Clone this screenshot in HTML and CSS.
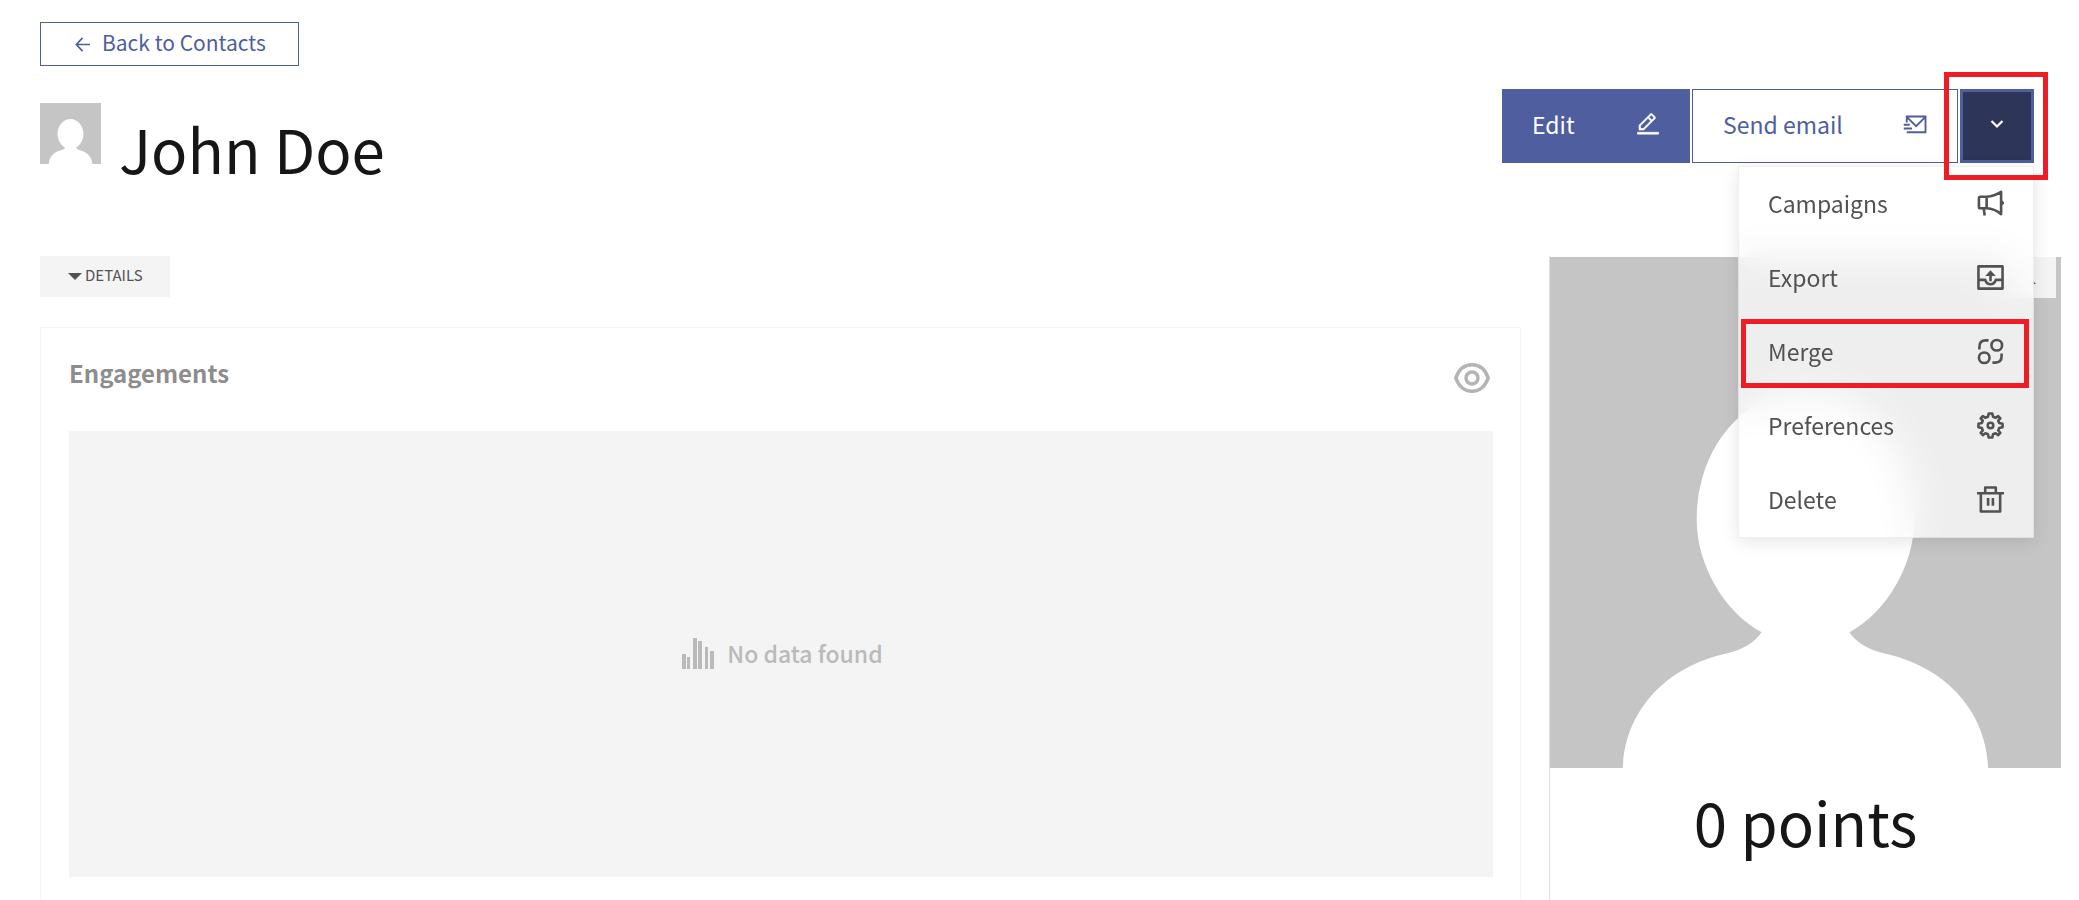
FILE: index.html
```html
<!DOCTYPE html>
<html lang="en">
<head>
<meta charset="utf-8">
<title>John Doe</title>
<meta name="viewport" content="width=device-width, initial-scale=1">
<link rel="stylesheet" href="styles.css">
</head>
<body>
<svg class="defs" aria-hidden="true">
  <symbol id="person" viewBox="0 0 512 512">
    <rect width="512" height="512" fill="#c5c5c5"/>
    <path fill="#fff" d="M256 134C316 134 365 190 365 263C365 309 337 356 300 376Q310 391 334 397C396 410 437 455 439 512H73C75 455 116 410 178 397Q202 391 212 376C175 356 147 309 147 263C147 190 196 134 256 134Z"/>
  </symbol>
</svg>

<header class="page-header">
  <a class="back" href="#">
    <svg class="back-icon" viewBox="0 0 16 16" fill="none" stroke="currentColor" stroke-width="1.800"><path d="M16 8H1.500M8 1L1.500 8L8 15"/></svg>
    Back to Contacts
  </a>
  <div class="title-row">
    <div class="identity">
      <svg class="avatar" role="img" aria-label="Contact picture"><use href="#person"/></svg>
      <h1 class="name">John Doe</h1>
    </div>
    <div class="actions">
      <button class="action action-primary" type="button">Edit
        <svg class="icon" viewBox="0 0 32 32" fill="currentColor" stroke="currentColor" stroke-width=".8"><path d="M2 27h28v2.500H2zM25.400 9c.8-.8.8-2 0-2.800l-3.600-3.600c-.8-.8-2-.8-2.800 0l-15 15V24h6.400zM20.400 4L24 7.600l-3 3L17.400 7zM6 22v-3.600l10-10 3.600 3.600-10 10z"/></svg>
      </button>
      <button class="action action-outline" type="button">Send email
        <svg class="icon" viewBox="0 0 32 32" fill="none" stroke="currentColor" stroke-width="2.500"><path d="M5 14V6h25v21H5M5 6.500L17.500 19L30 6.500M1 17h8M1 22h11"/></svg>
      </button>
      <button class="action action-toggle" type="button" aria-label="More actions" aria-expanded="true">
        <svg class="chevron" viewBox="0 0 14 10" fill="none" stroke="currentColor" stroke-width="2.200"><path d="M1.500 2L7 7.500L12.500 2"/></svg>
      </button>
      <div class="menu">
        <button class="menu-item" type="button">Campaigns
          <svg class="menu-icon" viewBox="0 0 28 28" fill="none" stroke="currentColor" stroke-width="2.700" stroke-linejoin="round"><path d="M10 7H3.500Q2 7 2 8.500V17.500Q2 19 3.500 19H10ZM10 7Q18 6.500 25 2V25Q18 19.500 10 19ZM7 19.500L8 26.500"/><path d="M25.500 11Q31 13.500 25.500 16" fill="currentColor" stroke="none"/></svg>
        </button>
        <button class="menu-item" type="button">Export
          <svg class="menu-icon" viewBox="0 0 28 28" fill="none" stroke="currentColor" stroke-width="2.700" stroke-linejoin="round"><path d="M1.500 2.500H26.500V25.500H1.500ZM1.500 16.500H8.500Q10 21 14 21Q18 21 19.500 16.500H26.500M14 18V10"/><path d="M8.500 12.500L14 6.500L19.500 12.500Z" fill="currentColor" stroke="none"/></svg>
        </button>
        <button class="menu-item menu-item-marked" type="button">Merge
          <svg class="menu-icon" viewBox="0 0 28 28" fill="none" stroke="currentColor" stroke-width="2.700"><circle cx="20.500" cy="7.500" r="5.500"/><circle cx="7.500" cy="20.500" r="5.500"/><path d="M2.500 12V9Q2.500 2.500 9 2.500H12M25.500 16V19Q25.500 25.500 19 25.500H16"/></svg>
        </button>
        <button class="menu-item" type="button">Preferences
          <svg class="menu-icon" viewBox="0 0 28 28" fill="none" stroke="currentColor" stroke-width="2.700" stroke-linejoin="round"><circle cx="14" cy="14" r="2.900"/><path d="M12.200 1.500H15.800L16.700 5L19.200 6L22 4.200L24.200 6.600L22 9L23 11.300L26.500 12.200V15.800L23 16.700L22 19.200L24.200 21.700L22 24L19.200 22L16.700 23L15.800 26.500H12.200L11.300 23L8.800 22L6 24L3.800 21.700L6 19.200L5 16.700L1.500 15.800V12.200L5 11.300L6 9L3.800 6.600L6 4.200L8.800 6L11.300 5Z"/></svg>
        </button>
        <button class="menu-item" type="button">Delete
          <svg class="menu-icon" viewBox="0 0 28 28" fill="none" stroke="currentColor" stroke-width="2.700" stroke-linejoin="round"><path d="M0 7.500H28M8.500 7V1.500H19.500V7M4 7.200V26.500H24V7.200M11.500 12.500V20.500M16.500 12.500V20.500"/></svg>
        </button>
      </div>
      <span class="toggle-mark"></span>
    </div>
  </div>
</header>

<main class="layout">
  <section class="content">
    <button class="details" type="button"><span class="caret-down"></span>DETAILS</button>
    <article class="card">
      <div class="card-head">
        <h2 class="card-title">Engagements</h2>
        <button class="eye" type="button" aria-label="Show engagements">
          <svg class="eye-icon" viewBox="0 0 36 30" fill="none" stroke="currentColor" stroke-width="3.500"><path d="M1.800 15C5 6 11 1.800 18 1.800S31 6 34.200 15C31 24 25 28.200 18 28.200S5 24 1.800 15Z"/><circle cx="18" cy="15" r="6"/></svg>
        </button>
      </div>
      <div class="empty">
        <svg class="bars" viewBox="0 0 32 32" fill="currentColor"><path d="M0 17h4v15H0zM5 20h3v12H5zM11 1h4v31h-4zM16 4h4v28h-4zM23 10h3v22h-3zM28 14h4v18h-4z"/></svg>
        No data found
      </div>
    </article>
  </section>
  <aside class="sidebar">
    <div class="photo">
      <svg class="photo-image" viewBox="0 0 512 512" role="img" aria-label="Contact picture"><use href="#person"/></svg>
      <button class="collapse" type="button" aria-label="Collapse">
        <svg class="caret-up" viewBox="11 0 3 7" fill="#525252"><path d="M0 7L7 0L14 7Z"/></svg>
      </button>
    </div>
    <p class="points">0 points</p>
  </aside>
</main>
</body>
</html>
```
FILE: styles.css
```css
* { box-sizing: border-box; }

body {
  margin: 0;
  min-height: 100vh;
  display: flex;
  flex-direction: column;
  background: #fff;
  color: #161616;
  font-family: "Noto Sans CJK SC", "Noto Sans", sans-serif;
}

button {
  font: inherit;
  margin: 0;
  border: 0;
  cursor: pointer;
}

.defs { position: absolute; width: 0; height: 0; }

.page-header {
  position: relative;
  z-index: 2;
  padding: 22px 45px 0 40px;
}

.back {
  display: inline-flex;
  align-items: center;
  gap: 12px;
  height: 44px;
  padding: 0 32px 4px 34px;
  border: 1px solid #4e5e9e;
  color: #4e5e9e;
  font-size: 21px;
  line-height: 32px;
  text-decoration: none;
}
.back-icon { width: 15px; height: 15px; margin-top: 4px; }

.title-row {
  display: flex;
  justify-content: space-between;
  align-items: flex-start;
  padding-top: 23px;
}
.identity {
  display: flex;
  gap: 18px;
  padding-top: 14px;
}
.avatar { width: 61px; height: 61px; }
.name {
  margin: 0;
  font-size: 60px;
  line-height: 90px;
  font-weight: 400;
}

.actions {
  position: relative;
  display: flex;
  gap: 2px;
}
.action {
  display: flex;
  align-items: center;
  justify-content: space-between;
  height: 74px;
  padding: 0 30px 4px;
  font-size: 23px;
  line-height: 32px;
}
.action-primary { width: 188px; background: #4e5e9e; color: #fff; }
.action-outline { width: 266px; background: #fff; color: #4e5e9e; border: 1px solid #4e5e9e; }
.action-toggle {
  width: 74px;
  justify-content: center;
  padding: 0 0 4px;
  background: #2d3558;
  border: 3px solid #4e5e9e;
  color: #fff;
}
.icon { width: 24px; height: 24px; }
.chevron { width: 14px; height: 10px; }

.toggle-mark {
  position: absolute;
  top: -17px;
  right: -14px;
  width: 104px;
  height: 108px;
  border: 5px solid #ee1c24;
  pointer-events: none;
}

.menu {
  position: absolute;
  top: 77px;
  right: 0;
  width: 296px;
  border: 1px solid rgba(0, 0, 0, 0.06);
  background: rgba(255, 255, 255, 0.7);
  backdrop-filter: blur(20px);
  box-shadow: 0 4px 16px rgba(0, 0, 0, 0.1);
}
.menu-item {
  position: relative;
  display: flex;
  align-items: center;
  justify-content: space-between;
  width: 100%;
  height: 74px;
  padding: 0 29px 2px;
  background: none;
  color: #525252;
  font-size: 23px;
  line-height: 32px;
}
.menu-icon { width: 27px; height: 27px; }
.menu-item-marked::after {
  content: "";
  position: absolute;
  inset: 4px 4px 1px 2px;
  border: 5px solid #ee1c24;
}

.layout {
  flex: 1;
  display: grid;
  grid-template-columns: minmax(0, 1fr) 512px;
  gap: 28px;
  padding: 63px 18px 0 40px;
}
.content { display: flex; flex-direction: column; align-items: flex-start; }

.details {
  display: flex;
  align-items: center;
  gap: 3px;
  height: 41px;
  padding: 0 27px 3px 28px;
  background: #f4f4f4;
  color: #525252;
  font-size: 15px;
  line-height: 24px;
}
.caret-down {
  margin-top: 3px;
  border-left: 7px solid transparent;
  border-right: 7px solid transparent;
  border-top: 7px solid #525252;
}
.caret-up { width: 3px; height: 7px; }

.card {
  flex: 1;
  align-self: stretch;
  margin-top: 30px;
  padding: 27px 27px 23px 28px;
  border: 1px solid #f4f4f4;
  border-bottom: 0;
}
.card-head {
  display: flex;
  justify-content: space-between;
  height: 76px;
}
.card-title {
  margin: 0;
  color: #8d8d8d;
  font-size: 24px;
  line-height: 36px;
  font-weight: 700;
}
.eye {
  height: 46px;
  padding: 0 3px;
  background: none;
  color: #b4b4b4;
}
.eye-icon { display: block; width: 36px; height: 30px; }

.empty {
  display: flex;
  align-items: center;
  justify-content: center;
  gap: 13px;
  min-height: 446px;
  padding: 0 0 3px 3px;
  background: #f4f4f4;
  color: #bababa;
  font-size: 23px;
  line-height: 36px;
  font-weight: 500;
}
.bars { width: 32px; height: 32px; }

.sidebar { padding-top: 1px; border-left: 1px solid #e0e0e0; }
.photo { position: relative; }
.photo-image { display: block; width: 100%; }
.collapse {
  position: absolute;
  top: 0;
  right: 5px;
  display: flex;
  align-items: center;
  justify-content: flex-end;
  width: 54px;
  height: 41px;
  padding: 5px 20px 0 0;
  background: #f4f4f4;
}
.points {
  margin: 0;
  padding-top: 8px;
  font-size: 60px;
  line-height: 90px;
  text-align: center;
}
```
